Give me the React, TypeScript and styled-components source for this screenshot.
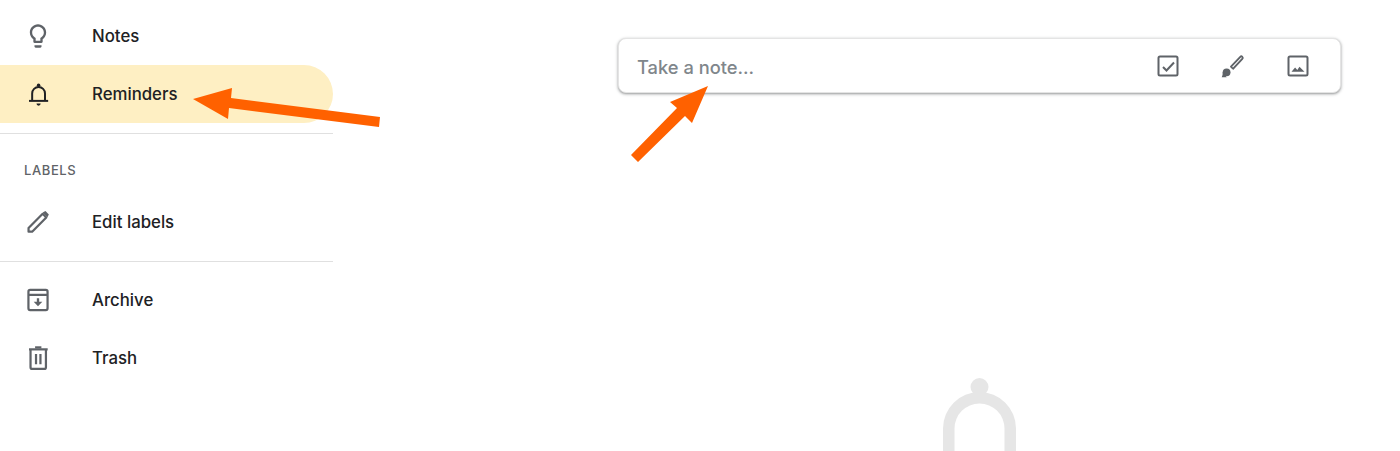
import React from "react";
import styled, { createGlobalStyle } from "styled-components";

const GlobalStyle = createGlobalStyle`
    html, body {
        margin: 0;
        padding: 0;
        background: #fff;
        font-family: "Inter", "Roboto", sans-serif;
    }
`;

const Page = styled.div`
    position: relative;
    display: flex;
    width: 1400px;
    height: 451px;
    overflow: hidden;
`;

const Sidebar = styled.nav`
    width: 333px;
    flex-shrink: 0;
    padding-top: 7px;
`;

const NavItem = styled.div<{ $active?: boolean }>`
    display: flex;
    align-items: center;
    gap: 40px;
    height: 58px;
    padding-left: 24px;
    box-sizing: border-box;
    border-radius: ${props => (props.$active ? "0 29px 29px 0" : "0")};
    background: ${props => (props.$active ? "#feefc3" : "transparent")};
    color: ${props => (props.$active ? "#202124" : "#5f6368")};
`;

const NavLabel = styled.span`
    font-size: 16.8px;
    line-height: 20px;
    font-weight: 500;
    color: #202124;
`;

const Rule = styled.div`
    height: 1px;
    margin: 10px 0 9px;
    background: #e0e0e0;
`;

const SectionTitle = styled.div`
    padding: 26px 0 13px 24px;
    margin-top: -9px;
    font-size: 13px;
    line-height: 20px;
    font-weight: 500;
    letter-spacing: 0.6px;
    color: #5f6368;
`;

const Main = styled.main`
    flex: 1;
    display: flex;
    flex-direction: column;
    align-items: center;
    padding: 38px 59px 0 285px;
`;

const NoteBar = styled.div`
    display: flex;
    align-items: center;
    justify-content: space-between;
    width: 100%;
    height: 55px;
    flex-shrink: 0;
    padding: 1px 30px 0 18px;
    box-sizing: border-box;
    background: #fff;
    border: 1px solid #e4e4e4;
    border-radius: 8px;
    box-shadow: 0 1px 2px rgba(60, 64, 67, 0.35), 0 1px 3px 1px rgba(60, 64, 67, 0.18);
`;

const Placeholder = styled.span`
    padding-top: 2px;
    font-size: 18.3px;
    font-weight: 500;
    color: #80868b;
`;

const Tools = styled.div`
    display: flex;
    gap: 41px;
    color: #5f6368;
`;

const EmptyBell = styled.svg`
    flex-shrink: 0;
    margin-top: 285px;
`;

const ArrowLayer = styled.svg`
    position: absolute;
    top: 0;
    left: 0;
    pointer-events: none;
`;

const IconSvg = styled.svg`
    display: block;
    flex-shrink: 0;
`;

const Icon = ({ size = 28, children }: { size?: number; children: React.ReactNode }) => (
    <IconSvg width={size} height={size} viewBox="0 0 24 24" fill="none" stroke="currentColor" strokeWidth="1.9">
        {children}
    </IconSvg>
);

const filled = { fill: "currentColor", stroke: "none" };

const BulbIcon = () => (
    <Icon>
        <path {...filled} d="M9 21c0 .55.45 1 1 1h4c.55 0 1-.45 1-1v-1H9v1zm3-19C8.14 2 5 5.14 5 9c0 2.38 1.19 4.47 3 5.74V17c0 .55.45 1 1 1h6c.55 0 1-.45 1-1v-2.26c1.81-1.27 3-3.36 3-5.74 0-3.86-3.14-7-7-7zm2.85 11.1l-.85.6V16h-4v-2.3l-.85-.6C7.8 12.16 7 10.63 7 9c0-2.76 2.24-5 5-5s5 2.24 5 5c0 1.63-.8 3.16-2.15 4.1z" />
    </Icon>
);

const BellIcon = () => (
    <Icon>
        <path strokeWidth="1.7" d="M7 17.7V11.5a5.5 5.5 0 0 1 11 0v6.2" />
        <path strokeWidth="1.7" d="M4.3 17.9h16.4" />
        <circle {...filled} cx="12.5" cy="4.4" r="1.5" />
        <path {...filled} d="M10.7 20.2h3.6a1.8 1.8 0 0 1-3.6 0z" />
    </Icon>
);

const PencilIcon = () => (
    <Icon>
        <path strokeLinejoin="round" d="M3.9 20.3v-3.1L16 5l3.1 3.1L7 20.3z" />
        <path {...filled} d="M16 3.8l2.4-1.2 2.9 2.9-1.2 2.4z" />
    </Icon>
);

const ArchiveIcon = () => (
    <Icon>
        <rect x="3.8" y="3.4" width="16.4" height="17.2" rx="1.5" />
        <path d="M3.8 7.6h16.4" />
        <path {...filled} d="M11 10.6h2v3h2.7L12 17.4l-3.7-3.8H11z" />
    </Icon>
);

const TrashIcon = () => (
    <Icon>
        <path d="M5.6 5v14.9a1.5 1.5 0 0 0 1.5 1.5h10.2a1.5 1.5 0 0 0 1.5-1.5V5" />
        <path d="M4.3 4.6h16" />
        <path d="M9.5 2.9h5.4" />
        <path d="M10.3 8.6v8.8M14.1 8.6v8.8" />
    </Icon>
);

const CheckIcon = () => (
    <Icon size={24}>
        <rect x="2.5" y="2.5" width="19" height="19" rx="1.5" strokeWidth="2" />
        <path strokeWidth="2" d="M7 13l3.5 3.5 7.5-8" />
    </Icon>
);

const BrushIcon = () => (
    <Icon size={24}>
        <path strokeLinejoin="round" d="M10 12.6L19.3 2.8c.6-.6 1.4-.6 2 0s.6 1.4 0 2L12.2 14.7c-.4.3-1.7-1.5-2.2-2.1z" />
        <circle {...filled} cx="5.6" cy="18.3" r="3.9" />
        <path {...filled} d="M1.7 18.3c0 2-.2 3.5-1 5h5z" />
    </Icon>
);

const ImageIcon = () => (
    <Icon size={24}>
        <rect x="2.5" y="2.5" width="19" height="19" rx="1.5" strokeWidth="2" />
        <path {...filled} d="M5.5 17.7l3.6-4.2 2.2 2.6 2.2-3.4 5 5z" />
    </Icon>
);

function App() {
    return (
        <>
            <GlobalStyle />
            <Page>
                <Sidebar>
                    <NavItem><BulbIcon /><NavLabel>Notes</NavLabel></NavItem>
                    <NavItem $active><BellIcon /><NavLabel>Reminders</NavLabel></NavItem>
                    <Rule />
                    <SectionTitle>LABELS</SectionTitle>
                    <NavItem><PencilIcon /><NavLabel>Edit labels</NavLabel></NavItem>
                    <Rule />
                    <NavItem><ArchiveIcon /><NavLabel>Archive</NavLabel></NavItem>
                    <NavItem><TrashIcon /><NavLabel>Trash</NavLabel></NavItem>
                </Sidebar>
                <Main>
                    <NoteBar>
                        <Placeholder>Take a note...</Placeholder>
                        <Tools>
                            <CheckIcon />
                            <BrushIcon />
                            <ImageIcon />
                        </Tools>
                    </NoteBar>
                    <EmptyBell width="73" height="120" viewBox="0 0 73 120" fill="#e6e6e6">
                        <circle cx="36.5" cy="9" r="9" />
                        <path d="M0 120V50.5a36.5 36.5 0 0 1 73 0V120H61.5V50.5a25 25 0 0 0-50 0V120z" />
                    </EmptyBell>
                </Main>
                <ArrowLayer width="1400" height="451" viewBox="0 0 1400 451" fill="#ff6100">
                    <polygon points="193,99 232,88 231,98 380,117 379,127 229,108 228,119" />
                    <polygon points="708,86 670,102 677,108 631,155 638,162 685,116 692,123" />
                </ArrowLayer>
            </Page>
        </>
    );
}

export default App;
